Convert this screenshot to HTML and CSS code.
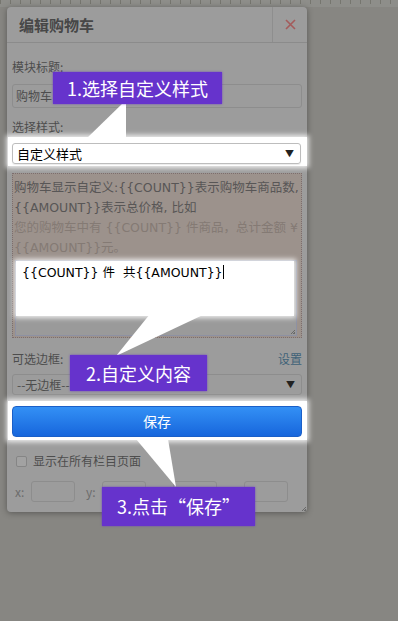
FILE: index.html
```html
<!DOCTYPE html>
<html>
<head>
<meta charset="utf-8"/>
<link rel="stylesheet" href="styles.css">
<title>编辑购物车</title>
</head>
<body>
<div class="ruler"></div>

<div class="dialog">
  <div class="dlg-head">
    <span class="dlg-title">编辑购物车</span>
    <span class="dlg-close">
      <svg width="11" height="11" viewBox="0 0 11 11"><path d="M1 1 L10 10 M10 1 L1 10" stroke="#a45b5b" stroke-width="1.6" fill="none"/></svg>
    </span>
  </div>
  <div class="dlg-body">
    <div class="label first">模块标题:</div>
    <div class="input">购物车</div>
    <div class="label">选择样式:</div>
    <div class="hl hl-select">
      <div class="select lit">自定义样式<span class="arrow">▼</span></div>
    </div>
    <div class="custom">
      <div class="hint">购物车显示自定义:{{COUNT}}表示购物车商品数,<br>{{AMOUNT}}表示总价格, 比如</div>
      <div class="hint light">您的购物车中有 {{COUNT}} 件商品，总计金额 ¥<br>{{AMOUNT}}元。</div>
      <div class="area">
        <div class="area-hl">{{COUNT}} 件&nbsp;&nbsp;共{{AMOUNT}}<span class="caret"></span></div>
        <span class="grip"></span>
      </div>
    </div>
    <div class="row-label"><span>可选边框:</span><span class="link">设置</span></div>
    <div class="select">--无边框--<span class="arrow">▼</span></div>
    <div class="hl hl-btn">
      <div class="btn">保存</div>
    </div>
    <div class="check"><span class="box"></span>显示在所有栏目页面</div>
    <div class="pos">
      <span class="pos-item"><span class="pos-lbl">x:</span><span class="pin"></span></span>
      <span class="pos-item"><span class="pos-lbl">y:</span><span class="pin"></span></span>
      <span class="pos-item"><span class="pos-lbl"></span><span class="pin"></span></span>
      <span class="pos-item"><span class="pos-lbl"></span><span class="pin"></span></span>
    </div>
  </div>
  <span class="grip dlg-grip"></span>
</div>

<!-- guide pointers -->
<svg class="pointers" width="398" height="621" viewBox="0 0 398 621">
  <polygon points="124,102 126,102 126,139 86,139" fill="#fff"/>
  <polygon points="150,314 205,314 116,356" fill="#fff"/>
  <polygon points="136,439 168,439 176,487" fill="#fff"/>
</svg>
<div class="tip tip1">1.选择自定义样式</div>
<div class="tip tip2">2.自定义内容</div>
<div class="tip tip3">3.点击“保存”</div>
</body>
</html>
```

FILE: styles.css
```css
body {
  margin: 0;
  width: 398px;
  height: 621px;
  background-color: #878682;
  position: relative;
  overflow: hidden;
  font-family: "Noto Sans CJK SC", "Noto Sans", sans-serif;
  font-size: 12px;
  color: #4d4d4d;
}

.ruler {
  height: 7px;
  background-color: #8e8e8a;
  background-image: repeating-linear-gradient(90deg, #76766f 0, #76766f 1px, transparent 1px, transparent 10px);
  background-size: 100% 4px;
  background-repeat: no-repeat;
}

.dialog {
  margin-left: 7px;
  width: 300px;
  background-color: #9c9c9c;
  border-radius: 4px;
  box-shadow: 0 1px 6px rgba(0,0,0,0.35);
  position: relative;
}

.dlg-head {
  display: flex;
  height: 35px;
  border-bottom: 1px solid #8b8b8b;
}
.dlg-title {
  flex: 1;
  padding-left: 12px;
  line-height: 35px;
  font-size: 15px;
  font-weight: bold;
  color: #474747;
}
.dlg-close {
  width: 34px;
  border-left: 1px solid #8e8e8e;
  display: flex;
  align-items: center;
  justify-content: center;
}

.dlg-body { padding: 0 5px 10px 5px; }

.label { line-height: 18px; margin-top: 10px; }
.label.first { margin-top: 15px; }

.input {
  margin-top: 8px;
  height: 22px;
  line-height: 22px;
  border: 1px solid #8d8d8d;
  border-radius: 3px;
  padding-left: 3px;
}

.hl {
  background-color: #fff;
  box-shadow: 0 0 5px 2px rgba(255,255,255,0.85);
}
.hl-select {
  margin: 1px -5px 0 -4px;
  padding: 6px 6px 2px 4px;
}
.hl-btn {
  margin: 6px -5px 0 -4px;
  padding: 5px 5px 3px 4px;
}

.select {
  height: 19px;
  line-height: 19px;
  border: 1px solid #8d8d8d;
  border-radius: 3px;
  padding-left: 4px;
  display: flex;
  justify-content: space-between;
  margin-top: 6px;
}
.select.lit {
  margin-top: 0;
  border-color: #bdbdbd;
  color: #000;
  font-size: 13px;
  box-shadow: 0 1px 1px rgba(0,0,0,0.08);
}
.arrow { font-size: 9px; padding-right: 6px; color: #222; }

.custom {
  margin-top: 7px;
  border: 1px dotted #7c6e6e;
  background-color: #9c928c;
  padding: 4px 1px 1px 1px;
}
.hint {
  line-height: 20px;
  color: #585656;
  white-space: nowrap;
  font-family: "DejaVu Sans", "Noto Sans CJK SC", sans-serif;
  font-size: 12.5px;
}
.hint.light { color: #847a74; }

.area {
  margin: 2px 0 0 1px;
  width: 280px;
  height: 74px;
  border: 1px solid #8d91a3;
  background-color: #9a9a9a;
  position: relative;
}
.area-hl {
  width: 268px;
  height: 47px;
  background-color: #fff;
  color: #000;
  padding: 4px 4px 4px 6px;
  line-height: 16px;
  white-space: nowrap;
  font-family: "DejaVu Sans", "Noto Sans CJK SC", sans-serif;
  font-size: 12.5px;
  box-shadow: 0 0 5px 2px rgba(255,255,255,0.85);
}
.caret {
  display: inline-block;
  width: 1px;
  height: 14px;
  background-color: #000;
  vertical-align: -2px;
}

.grip {
  position: absolute;
  right: 1px;
  bottom: 1px;
  width: 6px;
  height: 6px;
  background-image: repeating-linear-gradient(135deg, transparent 0, transparent 1px, #6a6a6a 1px, #6a6a6a 2px);
  clip-path: polygon(100% 0, 100% 100%, 0 100%);
}

.row-label {
  margin-top: 12px;
  line-height: 18px;
  display: flex;
  justify-content: space-between;
}
.link { color: #3f6278; }

.btn {
  height: 29px;
  line-height: 29px;
  border: 1px solid #1a5fc8;
  border-radius: 4px;
  background: linear-gradient(#3390f5, #1766dc);
  color: #fff;
  text-align: center;
  font-size: 14px;
}

.check {
  margin-top: 13px;
  line-height: 16px;
  display: flex;
  align-items: center;
  padding-left: 4px;
}
.box {
  width: 9px;
  height: 9px;
  border: 1px solid #858585;
  border-radius: 2px;
  background-color: #a2a2a2;
  margin-right: 6px;
}

.pos {
  margin-top: 12px;
  display: flex;
  gap: 11px;
  padding-left: 3px;
}
.pos-item { display: flex; align-items: center; }
.pos-lbl { width: 16px; color: #6c6c6c; }
.pin {
  width: 42px;
  height: 19px;
  border: 1px solid #8d8d8d;
  border-radius: 3px;
}

.dlg-grip { right: 1px; bottom: 1px; }

.pointers { position: absolute; left: 0; top: 0; }

.tip {
  position: absolute;
  background-color: #6633cc;
  color: #fff;
  font-size: 18px;
  text-align: center;
  box-shadow: 0 0 2px rgba(102,51,204,0.8);
}
.tip1 { left: 53px; top: 72px; width: 169px; height: 32px; line-height: 32px; }
.tip2 { left: 70px; top: 355px; width: 137px; height: 36px; line-height: 36px; }
.tip3 { left: 102px; top: 487px; width: 153px; height: 39px; line-height: 39px; }
```
